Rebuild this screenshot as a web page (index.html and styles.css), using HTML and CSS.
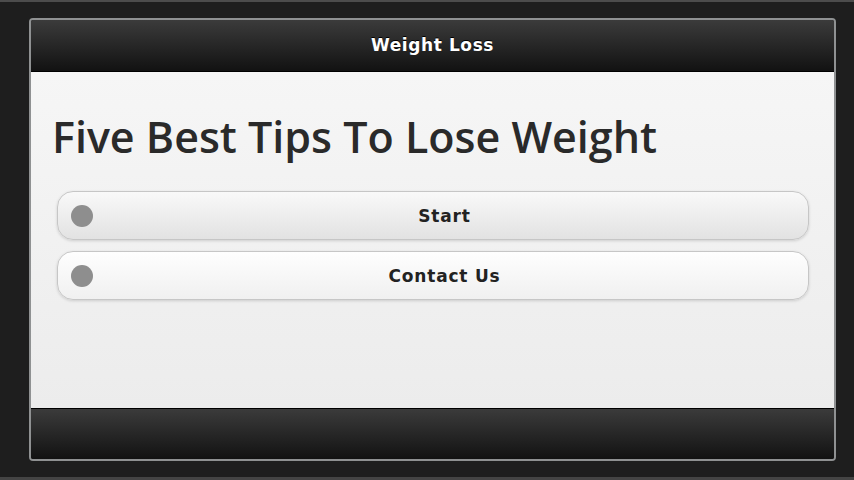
FILE: index.html
```html
<!DOCTYPE html>
<html lang="en">
  <head>
    <meta charset="UTF-8" />
    <meta name="viewport" content="width=device-width, initial-scale=1.0" />
    <title>Weight Loss</title>
    <link rel="stylesheet" href="styles.css">
  </head>
  <body>
    <div class="screen">
      <header class="topbar">
        <h1>Weight Loss</h1>
      </header>
      <main class="content">
        <h2>Five Best Tips To Lose Weight</h2>
        <nav class="menu">
          <a class="knap knap_valgt" href="#">
            <span class="prik"></span>
            <span class="label">Start</span>
          </a>
          <a class="knap" href="#">
            <span class="prik"></span>
            <span class="label">Contact Us</span>
          </a>
        </nav>
      </main>
      <footer class="bottombar"></footer>
    </div>
  </body>
</html>
```

FILE: styles.css
```css
html,
body {
  margin: 0;
  padding: 0;
  height: 480px;
}

body {
  background-color: #1e1e1e;
  border-top: 2px solid #4c4c4c;
  border-bottom: 3px solid #444;
  box-sizing: border-box;
  font-family: "DejaVu Sans", sans-serif;
  padding: 16px 18px 0 29px;
}

.screen {
  width: 807px;
  height: 443px;
  box-sizing: border-box;
  border: 2px solid #8f9192;
  border-radius: 4px;
  display: flex;
  flex-direction: column;
  overflow: hidden;
}

.topbar {
  height: 51px;
  background: linear-gradient(#3b3b3b, #121212);
  border-bottom: 1px solid #000;
  display: flex;
  align-items: center;
  justify-content: center;
}

.topbar h1 {
  margin: 0 0 2px 0;
  color: #fff;
  font-size: 17px;
  font-weight: 700;
  letter-spacing: 0.6px;
  text-shadow: 0 -1px 0 #000;
}

.content {
  flex: 1;
  background: linear-gradient(#f6f6f6, #ececec);
  padding: 0 25px 0 21px;
}

.content h2 {
  margin: 40px 0 29px 0;
  font-family: "Open Sans", "DejaVu Sans", sans-serif;
  font-size: 43px;
  font-weight: 600;
  color: #2a2a2a;
  line-height: 50px;
}

.menu {
  display: flex;
  flex-direction: column;
  gap: 11px;
  margin-left: 5px;
}

.knap {
  display: flex;
  align-items: center;
  height: 47px;
  border: 1px solid #c6c6c6;
  border-radius: 16px;
  background: linear-gradient(#fefefe, #f0f0f0);
  box-shadow: 0 1px 3px rgba(0, 0, 0, 0.15);
  text-decoration: none;
  color: #222;
  padding-left: 13px;
}

.knap_valgt {
  background: linear-gradient(#f9f9f9, #e2e2e2);
}

.prik {
  width: 22px;
  height: 22px;
  border-radius: 50%;
  background-color: #8e8e8e;
}

.label {
  flex: 1;
  text-align: center;
  font-size: 17px;
  font-weight: 700;
  letter-spacing: 0.8px;
  margin-right: 12px;
}

.bottombar {
  height: 50px;
  background: linear-gradient(#3b3b3b, #121212);
  border-top: 1px solid #000;
}
```
